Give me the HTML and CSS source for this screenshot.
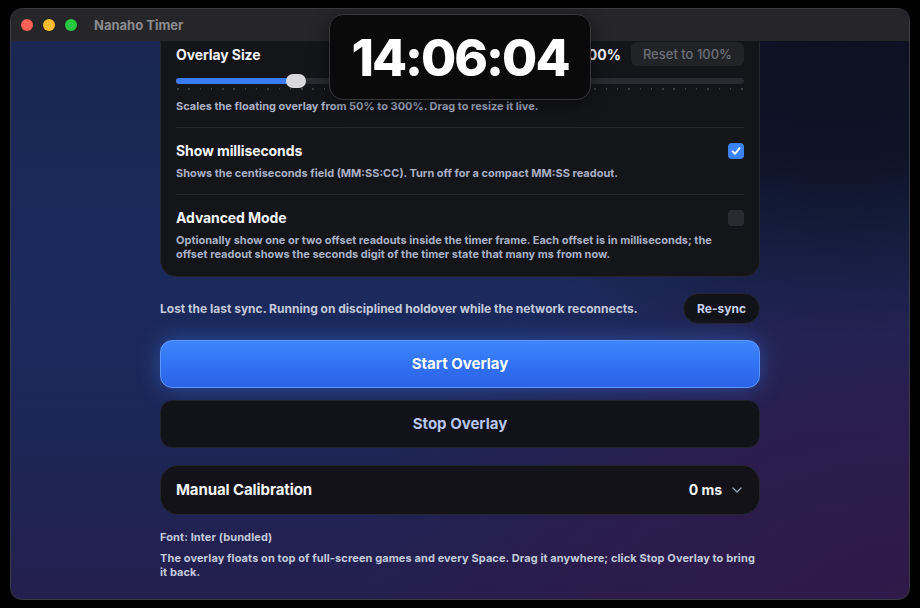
FILE: index.html
```html
<!DOCTYPE html>
<html lang="en">
<head>
    <meta charset="UTF-8">
    <meta name="viewport" content="width=device-width, initial-scale=1.0">
    <title>Nanaho Timer</title>
    <link rel="stylesheet" href="styles.css">
</head>
<body>
    <div class="window">
        <!-- Title bar -->
        <div class="titlebar">
            <div class="lights">
                <span class="light red"></span>
                <span class="light yellow"></span>
                <span class="light green"></span>
            </div>
            <div class="title">Nanaho Timer</div>
        </div>

        <!-- Scrolled content -->
        <div class="main">
            <div class="column">
                <div class="card settings">
                    <div class="row">
                        <div class="row-head">
                            <span class="label">Overlay Size</span>
                            <div class="size-right">
                                <span class="size-value">100%</span>
                                <button class="reset-btn">Reset to 100%</button>
                            </div>
                        </div>
                        <div class="slider">
                            <div class="track">
                                <div class="fill" style="width: 120px"></div>
                                <div class="thumb" style="left: 120px"></div>
                            </div>
                            <div class="ticks">
                                <span></span><span></span><span></span><span></span><span></span><span></span><span></span><span></span><span></span><span></span><span></span><span></span><span></span><span></span><span></span><span></span><span></span><span></span><span></span><span></span><span></span><span></span><span></span><span></span><span></span><span></span><span></span><span></span><span></span><span></span><span></span><span></span><span></span><span></span><span></span><span></span><span></span><span></span><span></span><span></span><span></span><span></span><span></span><span></span><span></span><span></span><span></span><span></span><span></span><span></span><span></span>
                            </div>
                        </div>
                        <p class="desc">Scales the floating overlay from 50% to 300%. Drag to resize it live.</p>
                    </div>

                    <div class="row">
                        <div class="row-head">
                            <span class="label">Show milliseconds</span>
                            <span class="check on">
                                <svg width="12" height="12" viewBox="0 0 12 12"><path d="M2.5 6.4 L5 8.8 L9.6 3.2" fill="none" stroke="#fff" stroke-width="1.9" stroke-linecap="round" stroke-linejoin="round"/></svg>
                            </span>
                        </div>
                        <p class="desc">Shows the centiseconds field (MM:SS:CC). Turn off for a compact MM:SS readout.</p>
                    </div>

                    <div class="row">
                        <div class="row-head">
                            <span class="label">Advanced Mode</span>
                            <span class="check"></span>
                        </div>
                        <p class="desc">Optionally show one or two offset readouts inside the timer frame. Each offset is in milliseconds; the offset readout shows the seconds digit of the timer state that many ms from now.</p>
                    </div>
                </div>

                <div class="sync">
                    <span>Lost the last sync. Running on disciplined holdover while the network reconnects.</span>
                    <button class="resync-btn">Re-sync</button>
                </div>

                <button class="big-btn start">Start Overlay</button>
                <button class="big-btn stop">Stop Overlay</button>

                <div class="card calib">
                    <span class="label big">Manual Calibration</span>
                    <div class="calib-value">
                        <span>0 ms</span>
                        <svg width="12" height="8" viewBox="0 0 12 8"><path d="M2 2 L6 6 L10 2" fill="none" stroke="#9aa3b8" stroke-width="1.3" stroke-linecap="round" stroke-linejoin="round"/></svg>
                    </div>
                </div>

                <p class="note">Font: Inter (bundled)</p>
                <p class="note">The overlay floats on top of full-screen games and every Space. Drag it anywhere; click Stop Overlay to bring it back.</p>
            </div>
        </div>
    </div>

    <!-- Floating timer overlay -->
    <div class="overlay">14:06:04</div>
</body>
</html>
```

FILE: styles.css
```css
* {
    box-sizing: border-box;
    font-family: 'Inter', 'Noto Sans', sans-serif;
}

body {
    margin: 0;
    width: 920px;
    height: 608px;
    background: #000;
    padding: 8px 10px;
    overflow: hidden;
}

.window {
    width: 900px;
    height: 592px;
    border-radius: 12px;
    overflow: hidden;
    border: 1px solid #3a3a40;
    display: flex;
    flex-direction: column;
    background:
        radial-gradient(ellipse 480px 320px at 92% 2%, #0d1020 0%, rgba(13, 16, 32, 0.85) 45%, rgba(13, 16, 32, 0) 100%),
        radial-gradient(ellipse 560px 380px at 100% 100%, #2f1a4a 0%, rgba(47, 26, 74, 0.7) 50%, rgba(47, 26, 74, 0) 100%),
        linear-gradient(180deg, #182650 0%, #1b2a5c 45%, #1d2656 75%, #241f4e 100%);
}

.titlebar {
    height: 32px;
    flex-shrink: 0;
    background: #262628;
    display: flex;
    align-items: center;
    padding-left: 10px;
    position: relative;
    z-index: 2;
}

.lights {
    display: flex;
    gap: 10px;
}

.light {
    width: 12px;
    height: 12px;
    border-radius: 50%;
}

.red { background: #fe5f57; }
.yellow { background: #febc2e; }
.green { background: #28c840; }

.title {
    margin-left: 17px;
    font-size: 13px;
    font-weight: 700;
    color: #8b8b8e;
}

.main {
    flex: 1;
    overflow: hidden;
}

.column {
    width: 600px;
    margin: -14px auto 0;
    display: flex;
    flex-direction: column;
}

.card {
    background: #141519;
    border: 1px solid #24262d;
    border-radius: 16px;
}

.settings {
    padding: 3px 15px 0;
}

.row {
    padding: 11px 0 14px;
    border-bottom: 1px solid #26282e;
}

.row:last-child {
    border-bottom: none;
    padding-bottom: 15px;
}

.row-head {
    display: flex;
    justify-content: space-between;
    align-items: center;
    height: 24px;
}

.label {
    font-size: 14px;
    font-weight: 700;
    color: #f2f3f7;
    letter-spacing: -0.1px;
}

.size-right {
    display: flex;
    align-items: center;
    gap: 10px;
}

.size-value {
    font-size: 14px;
    font-weight: 700;
    color: #f2f3f7;
}

.reset-btn {
    background: #222327;
    border: none;
    border-radius: 6px;
    color: #6d6f76;
    font-size: 13px;
    font-weight: 500;
    padding: 0 12px;
    height: 24px;
    white-space: nowrap;
}

.slider {
    padding: 12px 0 9px;
    position: relative;
}

.track {
    position: relative;
    height: 6px;
    border-radius: 3px;
    background: #2a2b30;
}

.fill {
    height: 6px;
    border-radius: 3px;
    background: #3b7cf0;
}

.thumb {
    position: absolute;
    top: -4px;
    width: 20px;
    height: 14px;
    margin-left: -10px;
    border-radius: 7px;
    background: #d9d9dc;
}

.ticks {
    display: flex;
    justify-content: space-between;
    margin-top: 4px;
    padding: 0 1px;
}

.ticks span {
    width: 1.5px;
    height: 1.5px;
    background: #3a3c44;
}

.desc {
    margin: 3px 0 0;
    font-size: 11px;
    font-weight: 700;
    line-height: 14px;
    color: #a9b0c4;
}

.slider + .desc {
    margin-top: 0;
}

.check {
    width: 16px;
    height: 16px;
    border-radius: 4px;
    background: #2a2b30;
    display: flex;
    align-items: center;
    justify-content: center;
}

.check.on {
    background: #3b82f6;
}

.sync {
    display: flex;
    justify-content: space-between;
    align-items: center;
    margin-top: 16px;
    font-size: 12px;
    font-weight: 700;
    color: #c3cadc;
}

.resync-btn {
    height: 31px;
    padding: 0 13px;
    border-radius: 16px;
    border: 1px solid #24262e;
    background: #121319;
    color: #c7d3f2;
    font-size: 12px;
    font-weight: 700;
}

.big-btn {
    height: 48px;
    border-radius: 12px;
    font-size: 15px;
    font-weight: 700;
    width: 100%;
}

.start {
    margin-top: 16px;
    border: 1px solid #5b97ff;
    background: linear-gradient(180deg, #3f86fb 0%, #2f6ef2 60%, #2c63e6 100%);
    color: #fff;
    box-shadow: 0 0 22px rgba(59, 130, 246, 0.45);
}

.stop {
    margin-top: 12px;
    border: 1px solid #23252d;
    background: #11121a;
    color: #b7c6ee;
}

.calib {
    margin-top: 17px;
    height: 50px;
    border-radius: 18px;
    display: flex;
    align-items: center;
    justify-content: space-between;
    padding: 0 16px 0 15px;
    background: #121218;
}

.label.big {
    font-size: 15px;
}

.calib-value {
    display: flex;
    align-items: center;
    gap: 9px;
    font-size: 14px;
    font-weight: 700;
    color: #f2f3f7;
}

.note {
    margin: 15px 0 0;
    font-size: 11px;
    font-weight: 700;
    line-height: 14px;
    letter-spacing: 0.1px;
    color: #c3cadc;
}

.note + .note {
    margin-top: 7px;
}

/* floating always-on-top timer */
.overlay {
    position: absolute;
    left: 329px;
    top: 14px;
    width: 262px;
    height: 86px;
    border-radius: 14px;
    background: #0a0a0b;
    border: 1px solid #38383c;
    color: #fff;
    font-size: 51px;
    font-weight: 800;
    letter-spacing: -2px;
    display: flex;
    align-items: center;
    justify-content: center;
    box-shadow: 0 4px 16px rgba(0, 0, 0, 0.5);
    z-index: 5;
}
```
